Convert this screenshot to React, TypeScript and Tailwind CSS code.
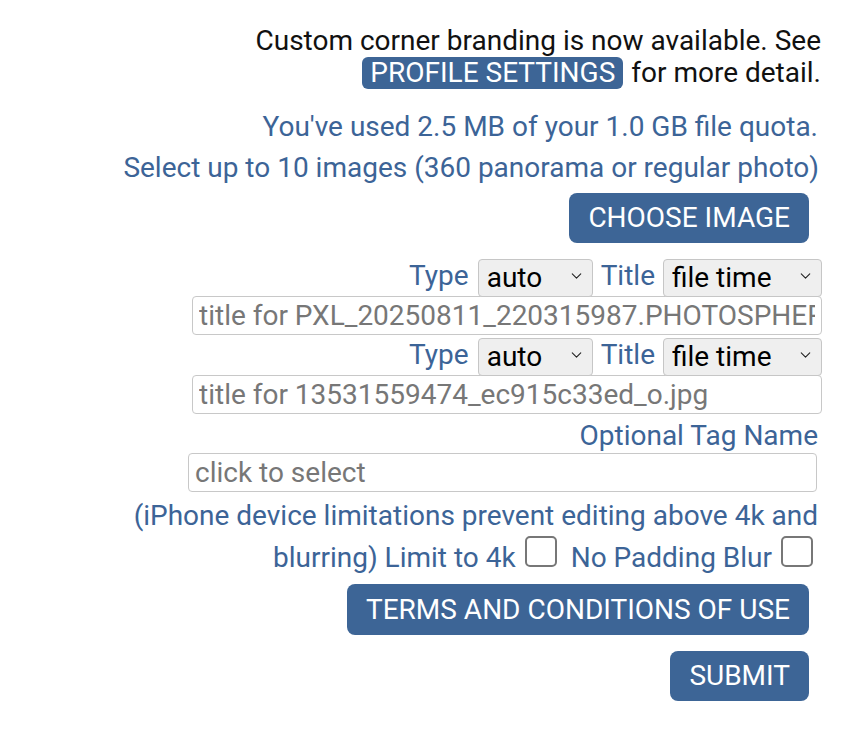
import { ChevronDown } from "lucide-react";

function Picker({ value, width }: { value: string; width: string }) {
  return (
    <div className={`relative h-[38px] ${width}`}>
      <select
        defaultValue={value}
        className="h-full w-full appearance-none rounded-[4px] border border-[#c6c6c6] bg-[#efefef] pl-[8px] pr-[30px] text-[28px] leading-none text-black outline-none"
      >
        <option>{value}</option>
      </select>
      <ChevronDown
        className="pointer-events-none absolute right-[8px] top-1/2 h-[17px] w-[17px] -translate-y-1/2 text-[#222]"
        strokeWidth={1.5}
      />
    </div>
  );
}

function TypeRow() {
  return (
    <div className="mt-[1px] flex h-[38px] items-center text-[#3c6497]">
      <span className="leading-[38px]">Type</span>
      <div className="ml-[9px]">
        <Picker value="auto" width="w-[115px]" />
      </div>
      <span className="ml-[8px] leading-[38px]">Title</span>
      <div className="ml-[8px]">
        <Picker value="file time" width="w-[159px]" />
      </div>
    </div>
  );
}

function TitleInput({ name }: { name: string }) {
  return (
    <input
      placeholder={`title for ${name}`}
      className="mt-[1px] h-[39px] w-[630px] rounded-[4px] border border-[#c8c8c8] bg-white px-[6px] text-[28px] text-black outline-none placeholder:text-[#777]"
    />
  );
}

function Box() {
  return <span className="ml-[9px] mr-[5px] inline-block h-[31px] w-[32px] rounded-[5px] border-2 border-[#777] bg-white" />;
}

export default function App() {
  return (
    <div className="min-h-screen bg-white font-['Roboto','Liberation_Sans',sans-serif] text-[28px]">
      <div className="flex flex-col items-end pr-[42px] pt-[25px]">
        <p className="mr-[1px] text-right leading-[32px] text-[#111]">
          Custom corner branding is now available. See
          <br />
          <span className="mr-[8px] inline-block rounded-[6px] bg-[#3d6596] px-[8px] leading-[32px] text-white">
            PROFILE SETTINGS
          </span>
          for more detail.
        </p>

        <p className="mr-[4px] mt-[22px] leading-[32px] text-[#3c6497]">
          You've used 2.5 MB of your 1.0 GB file quota.
        </p>
        <p className="mr-[3px] mt-[9px] leading-[32px] text-[#3c6497]">
          Select up to 10 images (360 panorama or regular photo)
        </p>

        <button className="mr-[13px] mt-[9px] h-[50px] rounded-[8px] bg-[#3d6596] px-[19px] text-white">
          CHOOSE IMAGE
        </button>

        <div className="mt-[13px] flex flex-col items-end">
          <TypeRow />
          <TitleInput name="PXL_20250811_220315987.PHOTOSPHERE.jpg" />
          <TypeRow />
          <TitleInput name="13531559474_ec915c33ed_o.jpg" />
        </div>

        <p className="mr-[4px] mt-[6px] leading-[32px] text-[#3c6497]">Optional Tag Name</p>
        <input
          placeholder="click to select"
          className="mr-[5px] mt-[1px] h-[39px] w-[629px] rounded-[4px] border border-[#c8c8c8] bg-white px-[6px] text-[28px] text-black outline-none placeholder:text-[#777]"
        />

        <p className="mr-[4px] mt-[4px] text-right leading-[40px] text-[#3c6497]">
          (iPhone device limitations prevent editing above 4k and
          <br />
          blurring) Limit to 4k
          <Box />
          <span className="ml-[9px]">No Padding Blur</span>
          <Box />
        </p>

        <button className="mr-[13px] mt-[6px] h-[51px] rounded-[8px] bg-[#3d6596] px-[19px] text-white">
          TERMS AND CONDITIONS OF USE
        </button>
        <button className="mr-[13px] mt-[16px] h-[50px] rounded-[8px] bg-[#3d6596] px-[19px] text-white">
          SUBMIT
        </button>
      </div>
    </div>
  );
}
